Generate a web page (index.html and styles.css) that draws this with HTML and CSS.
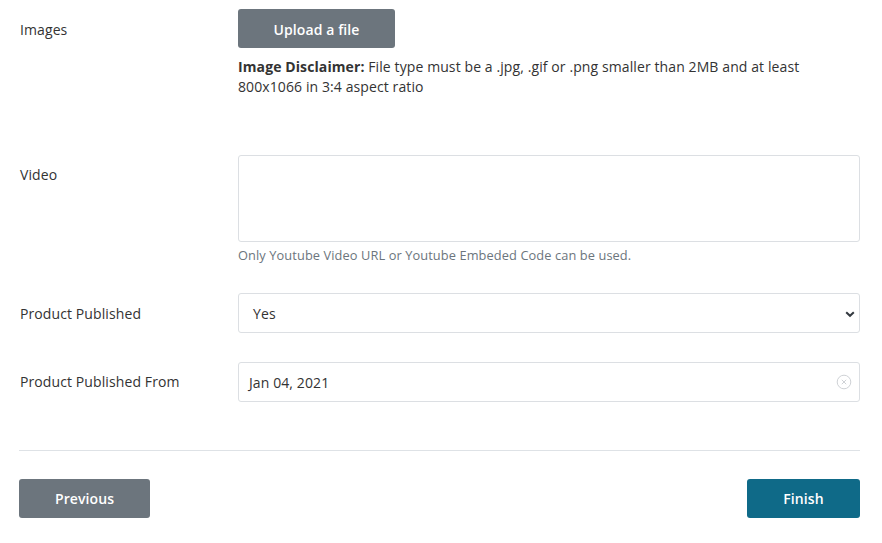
FILE: index.html
```html
<!DOCTYPE html>
<html>
<head>
<meta charset="utf-8">
<link rel="stylesheet" href="styles.css">
</head>
<body>
<div class="form">
  <div class="row row-images">
    <div class="label label-low">Images</div>
    <div class="field">
      <button class="btn btn-gray btn-upload">Upload a file</button>
      <p class="disclaimer"><b>Image Disclaimer:</b> File type must be a .jpg, .gif or .png smaller than 2MB and at least 800x1066 in 3:4 aspect ratio</p>
    </div>
  </div>
  <div class="row row-video">
    <div class="label">Video</div>
    <div class="field">
      <div class="textarea"></div>
      <div class="help">Only Youtube Video URL or Youtube Embeded Code can be used.</div>
    </div>
  </div>
  <div class="row">
    <div class="label label-low">Product Published</div>
    <div class="field">
      <div class="input select"><span class="val val-select">Yes</span>
        <svg class="chev" width="10" height="8" viewBox="0 0 10 8"><path d="M1.2 2.2 L5 5.8 L8.8 2.2" fill="none" stroke="#343a40" stroke-width="2"/></svg>
      </div>
    </div>
  </div>
  <div class="row">
    <div class="label">Product Published From</div>
    <div class="field">
      <div class="input"><span class="val">Jan 04, 2021</span>
        <svg class="clear" width="16" height="16" viewBox="0 0 16 16"><circle cx="8" cy="8" r="6.8" fill="none" stroke="#cfd2d6" stroke-width="1"/><path d="M5.8 5.8 L10.2 10.2 M10.2 5.8 L5.8 10.2" stroke="#cfd2d6" stroke-width="1"/></svg>
      </div>
    </div>
  </div>
  <hr class="divider">
  <div class="actions">
    <button class="btn btn-gray btn-prev">Previous</button>
    <button class="btn btn-teal btn-finish">Finish</button>
  </div>
</div>
</body>
</html>
```
FILE: styles.css
```css
* { box-sizing: border-box; }
body {
  margin: 0;
  background: #fff;
  font-family: "Open Sans", "Noto Sans", sans-serif;
  font-size: 14px;
  letter-spacing: 0.1px;
  color: #333;
}
.form {
  padding: 9px 22px 0 19px;
}
.row {
  display: grid;
  grid-template-columns: 219px 1fr;
  margin-bottom: 29px;
}
.row-images { margin-bottom: 58px; }
.row-video { margin-bottom: 29px; }
.label {
  padding-top: 10px;
  padding-left: 1px;
  line-height: 20px;
  color: #333;
}
.label-low { padding-top: 11px; }
.field { min-width: 0; }
.btn {
  border: 0;
  border-radius: 3px;
  color: #fff;
  font-family: "Open Sans", "Noto Sans", sans-serif;
  font-size: 14px;
  letter-spacing: 0.1px;
  font-weight: 600;
  height: 39px;
  padding: 0;
  display: flex;
  align-items: center;
  justify-content: center;
}
.btn-upload { padding-top: 2px; }
.btn-gray { background: #6c757d; }
.btn-teal { background: #0f6a88; }
.btn-upload { width: 157px; }
.disclaimer {
  margin: 9px 0 0;
  line-height: 20px;
  padding-right: 40px;
}
.disclaimer b { font-weight: 700; }
.textarea {
  height: 87px;
  border: 1px solid #dcdfe3;
  border-radius: 3px;
}
.help {
  margin-top: 4px;
  font-size: 12.8px;
  line-height: 18px;
  color: #6c757d;
}
.input {
  height: 40px;
  border: 1px solid #dcdfe3;
  border-radius: 3px;
  display: flex;
  align-items: center;
  justify-content: space-between;
  padding: 0 7px 0 10px;
}
.val { line-height: 20px; padding-top: 2px; color: #333; }
.val-select { padding-left: 4px; }
.select { padding-right: 4px; }
.chev { margin-top: 1px; }
.divider {
  margin: 48px 0 28px;
  border: 0;
  border-top: 1px solid #dee2e6;
}
.actions {
  display: flex;
  justify-content: space-between;
}
.btn-prev { width: 131px; }
.btn-finish { width: 113px; }
```
